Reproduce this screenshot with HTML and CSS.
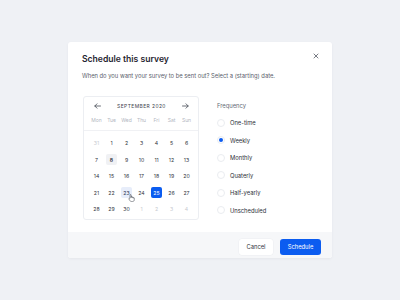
FILE: index.html
```html
<!DOCTYPE html>
<html>
<head>
<meta charset="utf-8">
<link rel="stylesheet" href="styles.css">
</head>
<body>
<div class="page">
  <div class="modal">
    <div class="close">
      <svg width="6" height="6" viewBox="0 0 6 6"><path d="M1 1L5 5M5 1L1 5" stroke="#555a64" stroke-width="0.8" stroke-linecap="round"/></svg>
    </div>
    <div class="content">
      <div class="title">Schedule this survey</div>
      <div class="subtitle">When do you want your survey to be sent out? Select a (starting) date.</div>
      <div class="body">
        <div class="calendar">
          <div class="cal-head">
            <svg width="7" height="6" viewBox="0 0 7 6"><path d="M6.5 3H0.8M3 0.8L0.8 3L3 5.2" fill="none" stroke="#444a54" stroke-width="0.8" stroke-linecap="round" stroke-linejoin="round"/></svg>
            <span class="month">September 2020</span>
            <svg width="7" height="6" viewBox="0 0 7 6"><path d="M0.5 3H6.2M4 0.8L6.2 3L4 5.2" fill="none" stroke="#444a54" stroke-width="0.8" stroke-linecap="round" stroke-linejoin="round"/></svg>
          </div>
          <div class="weekdays">
            <span>Mon</span><span>Tue</span><span>Wed</span><span>Thu</span><span>Fri</span><span>Sat</span><span>Sun</span>
          </div>
          <div class="dates">
            <span class="muted">31</span><span>1</span><span>2</span><span>3</span><span>4</span><span>5</span><span>6</span>
            <span>7</span><span class="today"><b>8</b></span><span>9</span><span>10</span><span>11</span><span>12</span><span>13</span>
            <span>14</span><span>15</span><span>16</span><span>17</span><span>18</span><span>19</span><span>20</span>
            <span>21</span><span>22</span><span class="hover"><b>23</b>
              <svg class="cursor" width="7" height="8" viewBox="0 0 7 8"><path d="M2 4.2V1.1a0.55 0.55 0 0 1 1.1 0V3.6V3a0.55 0.55 0 0 1 1.1 0v0.7a0.55 0.55 0 0 1 1.1 0v0.5a0.5 0.5 0 0 1 1 0V5.6c0 1.2-0.8 2-1.9 2H3.4c-0.6 0-1-0.3-1.3-0.8L0.9 5.1a0.5 0.5 0 0 1 0.8-0.6z" fill="#fff" stroke="#3b4049" stroke-width="0.55" stroke-linejoin="round"/></svg>
            </span><span>24</span><span class="selected"><b>25</b></span><span>26</span><span>27</span>
            <span>28</span><span>29</span><span>30</span><span class="muted">1</span><span class="muted">2</span><span class="muted">3</span><span class="muted">4</span>
          </div>
        </div>
        <div class="freq">
          <div class="freq-label">Frequency</div>
          <div class="options">
            <div class="opt"><span class="radio"></span>One-time</div>
            <div class="opt"><span class="radio on"></span>Weekly</div>
            <div class="opt"><span class="radio"></span>Monthly</div>
            <div class="opt"><span class="radio"></span>Quaterly</div>
            <div class="opt"><span class="radio"></span>Half-yearly</div>
            <div class="opt"><span class="radio"></span>Unscheduled</div>
          </div>
        </div>
      </div>
    </div>
    <div class="footer">
      <button class="btn cancel">Cancel</button>
      <button class="btn primary">Schedule</button>
    </div>
  </div>
</div>
</body>
</html>
```
FILE: styles.css
```css
html, body { margin: 0; padding: 0; }
body {
  background: #eff1f5;
  font-family: Inter, "Noto Sans", sans-serif;
  width: 400px;
  height: 300px;
  overflow: hidden;
  -webkit-font-smoothing: antialiased;
}
.page { padding: 42px 0 0 68px; }
.modal {
  position: relative;
  width: 264px;
  height: 216px;
  background: #fff;
  border-radius: 3px;
  box-shadow: 0 1px 3px rgba(30, 40, 60, 0.05);
  display: flex;
  flex-direction: column;
  overflow: hidden;
}
.close {
  position: absolute;
  top: 11px;
  right: 13px;
  width: 6px;
  height: 6px;
  display: flex;
}
.content { flex: 1; padding: 11px 14px 0 14px; }
.title {
  font-size: 8.6px;
  line-height: 12px;
  font-weight: 600;
  color: #1f2430;
}
.subtitle {
  margin-top: 7px;
  font-size: 5.8px;
  line-height: 8px;
  color: #5a606b;
}
.body { display: flex; margin-top: 16px; }
.calendar {
  margin-left: 1px;
  width: 114px;
  height: 122px;
  border: 1px solid #eceef2;
  border-radius: 3px;
  box-sizing: content-box;
}
.cal-head {
  height: 17px;
  display: flex;
  align-items: center;
  justify-content: space-between;
  padding: 0 9px 0 10px;
}
.month {
  font-size: 4.9px;
  letter-spacing: 0.45px;
  text-transform: uppercase;
  color: #3c414b;
  font-weight: 400;
}
.weekdays {
  display: grid;
  grid-template-columns: repeat(7, 15px);
  padding: 0 4px 4px 5px;
  height: 12px;
  align-items: center;
  border-bottom: 1px solid #f0f1f4;
}
.weekdays span {
  text-align: center;
  font-size: 5px;
  color: #b3b7bf;
}
.dates {
  display: grid;
  grid-template-columns: repeat(7, 15px);
  grid-auto-rows: 16.5px;
  padding: 4px 4px 0 5px;
}
.dates span {
  position: relative;
  display: flex;
  align-items: center;
  justify-content: center;
  font-size: 5.2px;
  color: #30343c;
}
.dates span b { font-weight: 400; }
.dates .muted { color: #c7cad0; }
.dates .today b,
.dates .hover b,
.dates .selected b {
  width: 11px;
  height: 11px;
  border-radius: 2px;
  display: flex;
  align-items: center;
  justify-content: center;
}
.dates .today b { background: #f0f1f4; font-weight: 600; }
.dates .hover b { background: #e7edfa; color: #2b3550; }
.dates .selected b { background: #0b5cf0; color: #fff; }
.cursor { position: absolute; left: 9px; top: 9.5px; }
.freq { margin-left: 18px; flex: 1; }
.freq-label {
  margin-top: 6px;
  font-size: 5.8px;
  line-height: 8px;
  color: #646a75;
}
.options { margin-top: 4px; }
.opt {
  height: 17.5px;
  display: flex;
  align-items: center;
  font-size: 5.8px;
  color: #2c3038;
}
.radio {
  width: 8px;
  height: 8px;
  border: 0.7px solid #eaecf0;
  border-radius: 50%;
  box-sizing: border-box;
  margin-right: 5px;
  display: flex;
  align-items: center;
  justify-content: center;
  background: #fff;
}
.radio.on::after {
  content: "";
  width: 4px;
  height: 4px;
  border-radius: 50%;
  background: #0b5cf0;
}
.footer {
  height: 26px;
  background: #f6f7f9;
  display: flex;
  align-items: center;
  justify-content: flex-end;
  gap: 7px;
  padding: 3px 11px 0 0;
  box-sizing: border-box;
}
.btn {
  height: 16px;
  border: none;
  border-radius: 3px;
  font-family: Inter, "Noto Sans", sans-serif;
  font-size: 5.8px;
  padding: 0;
  cursor: pointer;
}
.cancel {
  width: 34px;
  background: #fff;
  color: #30343c;
  box-shadow: 0 0 0 0.5px #eceef1;
}
.primary {
  width: 41px;
  background: #0b5cf0;
  color: #fff;
}
```
